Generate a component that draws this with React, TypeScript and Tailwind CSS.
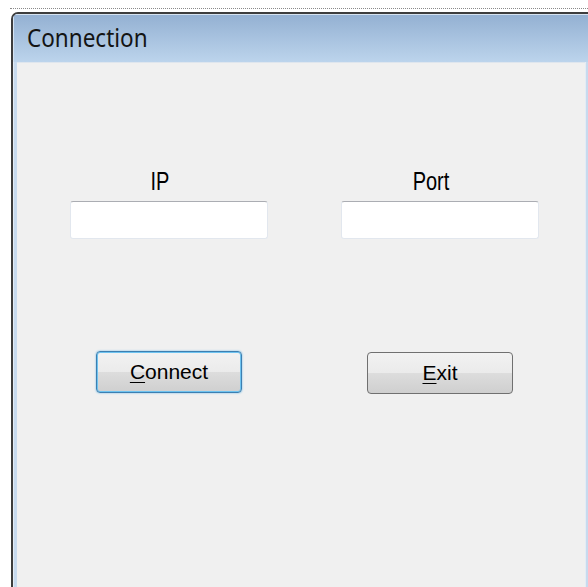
import React from "react";

const sans = { fontFamily: '"Liberation Sans", Arial, sans-serif' };

function Field({ label, className }: { label: string; className?: string }) {
  return (
    <div className={`flex flex-col items-center w-[198px] ${className ?? ""}`}>
      <div className="h-[26px] pr-[18px] flex items-center">
        <span className="text-[20px] leading-none text-black scale-y-125 inline-block" style={sans}>
          {label}
        </span>
      </div>
      <input
        className="mt-[7px] w-[198px] h-[38px] bg-white rounded-[3px] border border-[#e2e7ee] border-t-[#abadb3] outline-none"
        type="text"
      />
    </div>
  );
}

function WinButton({
  mnemonic,
  rest,
  focused,
}: {
  mnemonic: string;
  rest: string;
  focused?: boolean;
}) {
  return (
    <button
      className={`w-[146px] h-[42px] rounded-[4px] border flex items-center justify-center text-[21px] text-black ${
        focused
          ? "border-[#3c7fb1] shadow-[0_0_0_1px_#6ec3f0_inset,0_0_2px_#5fb4e8]"
          : "border-[#707070]"
      } bg-[linear-gradient(to_bottom,#f2f2f2_0%,#ebebeb_49%,#dddddd_50%,#cfcfcf_100%)]`}
      style={sans}
    >
      <span>
        <span className="underline underline-offset-[3px] decoration-1">{mnemonic}</span>
        {rest}
      </span>
    </button>
  );
}

export default function App() {
  return (
    <div className="w-[588px] h-[587px] bg-white overflow-hidden">
      {/* designer selection outline */}
      <div className="ml-[10px] pt-[8px]">
        <div className="border-t border-dotted border-[#8a8a8a]" />
      </div>

      {/* form window */}
      <div className="ml-[11px] mt-[3px] w-[600px] h-[620px] rounded-tl-[7px] border-l-2 border-t-2 border-[#3d3d3d] flex flex-col overflow-hidden">
        <div className="h-[48px] pl-[14px] flex items-center bg-[linear-gradient(to_bottom,#93b0d2,#bcd4ec)] shadow-[inset_1px_1px_0_#d6e3f1]">
          <span
            className="text-[22.5px] text-[#141414] scale-y-110 inline-block"
            style={{ fontFamily: '"Noto Sans", "Open Sans", sans-serif' }}
          >
            Connection
          </span>
        </div>
        <div className="flex-1 flex">
          <div className="w-[4px] bg-[#c7daee] border-l border-[#e4ecf5]" />
          {/* client area */}
          <div className="w-[568px] bg-[#f0f0f0] border-t border-[#dfe6ee] pt-[105px]">
            <div className="flex pl-[53px] gap-[73px]">
              <div className="flex flex-col items-center">
                <Field label="IP" />
                <div className="mt-[112px]">
                  <WinButton mnemonic="C" rest="onnect" focused />
                </div>
              </div>
              <div className="flex flex-col items-center">
                <Field label="Port" />
                <div className="mt-[113px]">
                  <WinButton mnemonic="E" rest="xit" />
                </div>
              </div>
            </div>
          </div>
          <div className="w-[6px] bg-[#c7daee] border-l border-[#e4ecf5]" />
        </div>
      </div>
    </div>
  );
}
